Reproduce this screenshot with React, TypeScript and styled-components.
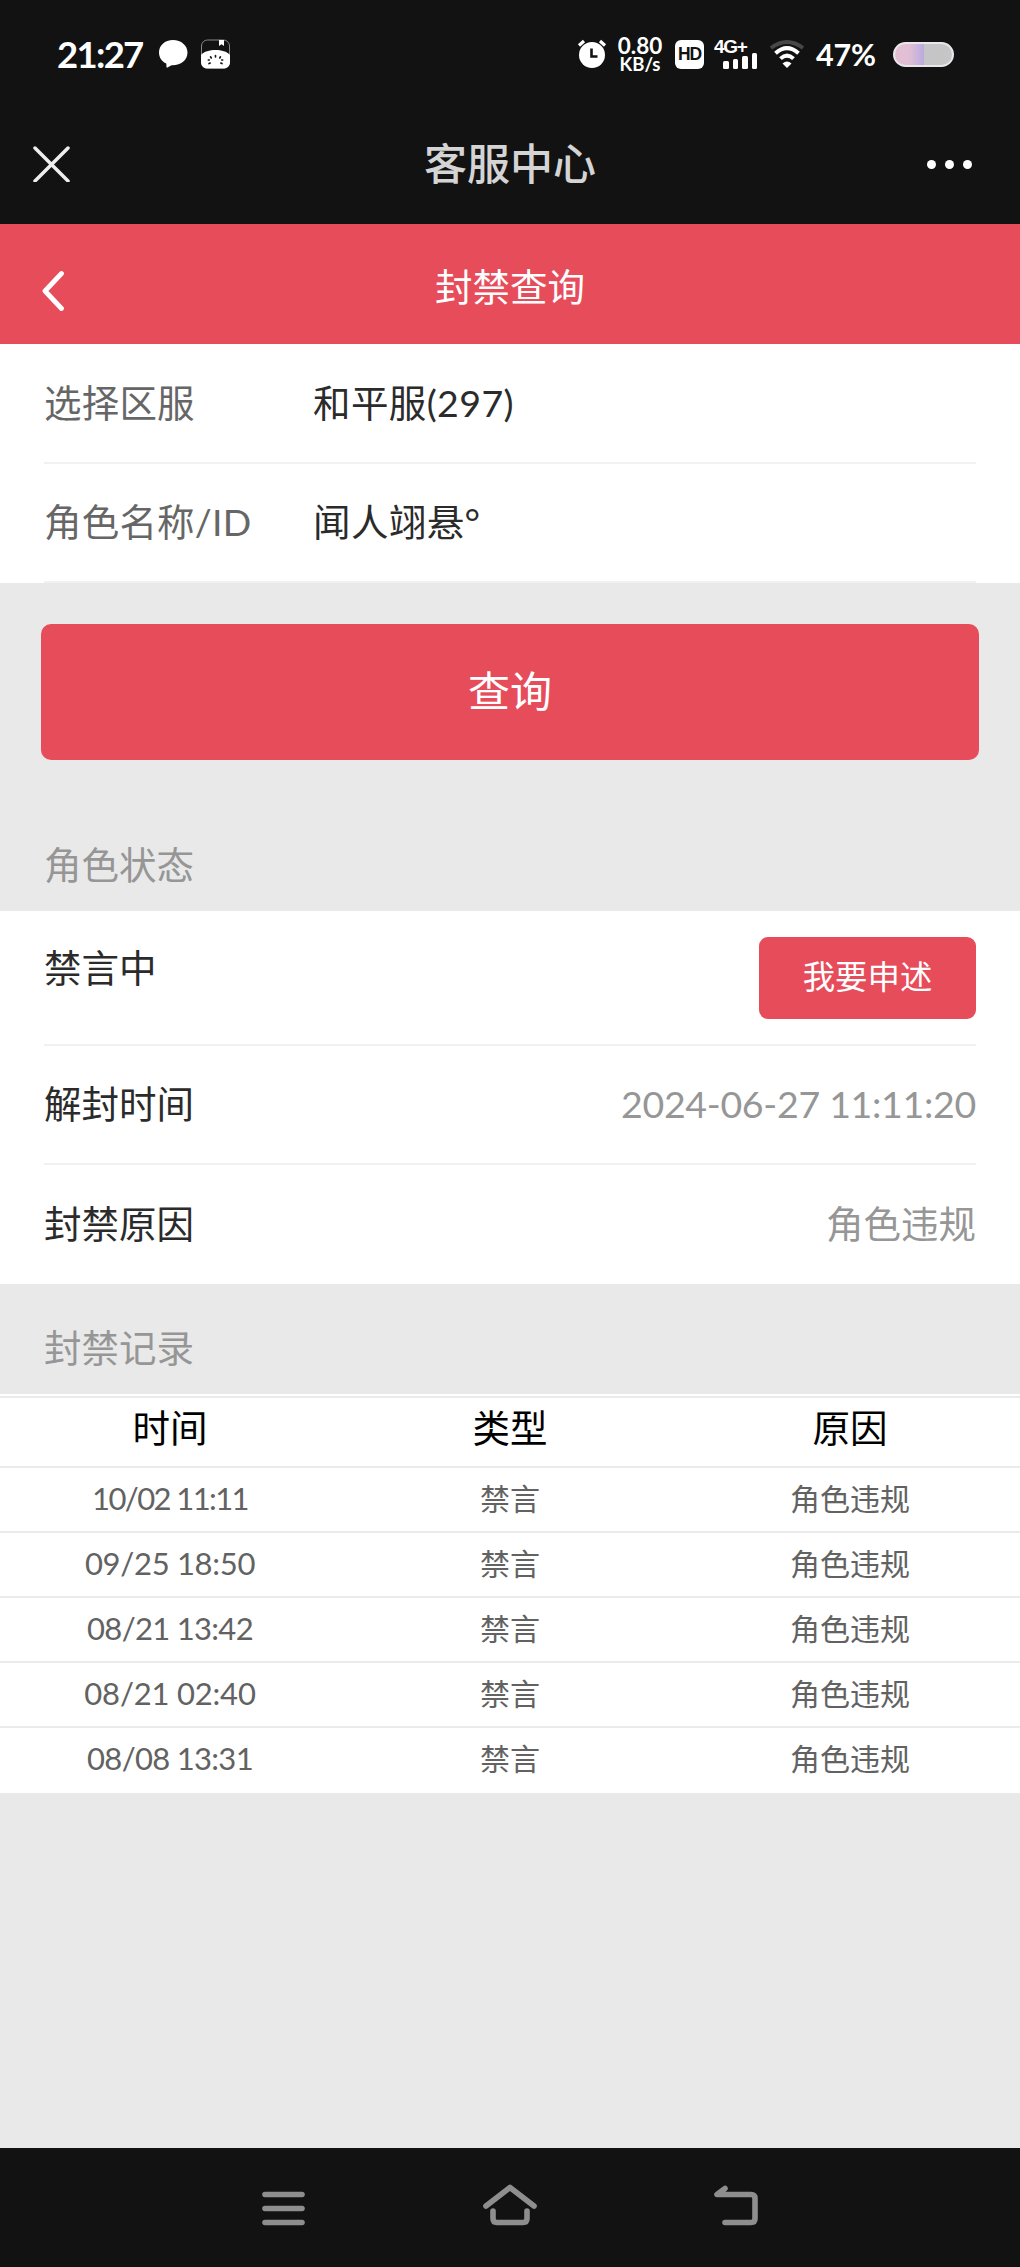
import React from 'react';
import styled, { createGlobalStyle } from 'styled-components';

const RED = '#e74c5b';
const BLACK = '#121212';

const GlobalStyle = createGlobalStyle`
  * { box-sizing: border-box; }
  body {
    margin: 0;
    background: #e9e9e9;
    font-family: Lato, "Noto Sans CJK SC", sans-serif;
  }
`;

const Screen = styled.div`
  width: 1020px;
  height: 2267px;
  display: flex;
  flex-direction: column;
  background: #e9e9e9;
  overflow: hidden;
`;

const StatusBar = styled.header`
  height: 106px;
  padding: 2px 66px 0 57px;
  display: flex;
  justify-content: space-between;
  align-items: center;
  background: ${BLACK};
  color: #fff;
`;

const StatusGroup = styled.div`
  display: flex;
  align-items: center;
  height: 38px;
`;

const Clock = styled.span`
  width: 101px;
  font-size: 36.5px;
  font-weight: 700;
  letter-spacing: -1.7px;
  line-height: 36px;
  white-space: nowrap;
`;

const NetSpeed = styled.div`
  width: 46px;
  margin: 0 12px 0 10px;
  display: flex;
  flex-direction: column;
  align-items: center;
  font-weight: 700;
  white-space: nowrap;
`;

const SpeedValue = styled.span`
  font-size: 22.5px;
  line-height: 20px;
`;

const SpeedUnit = styled.span`
  font-size: 18.5px;
  line-height: 17px;
`;

const HdBadge = styled.span`
  width: 29px;
  height: 29px;
  margin-right: 10px;
  display: flex;
  align-items: center;
  justify-content: center;
  border-radius: 6px;
  background: #fff;
  color: ${BLACK};
  font: 700 17.5px/29px "Liberation Sans", sans-serif;
  letter-spacing: -1.2px;
`;

const Signal = styled.div`
  width: 43px;
  height: 30px;
  margin-right: 12px;
  display: grid;
  grid-template-rows: 14px 16px;
`;

const SignalLabel = styled.span`
  font: 700 19px/16px "Liberation Sans", sans-serif;
  letter-spacing: -1.3px;
`;

const SignalBars = styled.div`
  display: flex;
  justify-content: flex-end;
  align-items: flex-end;
  gap: 4px;
`;

const Bar = styled.i<{ $height: number }>`
  width: 5.5px;
  height: ${({ $height }) => $height}px;
  border-radius: 1.5px;
  background: #fff;
`;

const Percent = styled.span`
  width: 88px;
  padding-left: 11px;
  font-size: 30.5px;
  font-weight: 700;
  line-height: 34px;
  letter-spacing: -0.2px;
  white-space: nowrap;
`;

const Battery = styled.div`
  width: 61px;
  height: 25px;
  border: 2px solid #e9e7ec;
  border-radius: 12.5px;
  background: linear-gradient(90deg, #e5bfd3 0%, #e0bfd5 25%, #b9ace0 50%, #c5c5c8 51%, #c6c6c6 100%);
`;

const AppBar = styled.div`
  height: 118px;
  padding: 0 48px 2px 33px;
  display: grid;
  grid-template-columns: 1fr auto 1fr;
  align-items: center;
  background: ${BLACK};
`;

const AppTitle = styled.h1`
  margin: 0 0 0 15px;
  color: #d4d4d4;
  font-size: 43px;
  font-weight: 500;
  line-height: 60px;
`;

const Dots = styled.div`
  display: flex;
  justify-content: flex-end;
  gap: 9px;
`;

const Dot = styled.i`
  width: 9px;
  height: 9px;
  border-radius: 50%;
  background: #fff;
`;

const PageBar = styled.div`
  height: 120px;
  padding: 6px 42px 0;
  display: grid;
  grid-template-columns: 1fr auto 1fr;
  align-items: center;
  background: ${RED};
`;

const PageTitle = styled.h2`
  margin: 0;
  color: #fff;
  font-size: 37.5px;
  font-weight: 400;
  line-height: 50px;
`;

const Panel = styled.section`
  padding: 0 44px;
  background: #fff;
`;

const Row = styled.div<{ $height?: number; $last?: boolean }>`
  height: ${({ $height = 120 }) => $height}px;
  display: flex;
  align-items: center;
  border-bottom: ${({ $last }) => ($last ? 'none' : '2px solid #f1f1f1')};
  color: #2b2b2b;
  font-size: 37.5px;
  line-height: 50px;
  white-space: nowrap;
`;

const FieldLabel = styled.span`
  width: 269px;
  padding-bottom: 1px;
  color: #666;
  letter-spacing: 0.2px;
`;

const FieldValue = styled.span`
  padding-bottom: 1px;
  color: #2b2b2b;
  letter-spacing: 0.4px;
`;

const StateLabel = styled.span<{ $raised?: boolean }>`
  flex: 1;
  margin-bottom: ${({ $raised }) => ($raised ? '19px' : '2px')};
`;

const StateValue = styled.span<{ $spacing?: number }>`
  margin-bottom: 2px;
  color: #969696;
  letter-spacing: ${({ $spacing = 0 }) => $spacing}px;
`;

const QueryButton = styled.button`
  height: 136px;
  margin: 41px 41px 0;
  padding: 0 0 3px;
  border: 0;
  border-radius: 10px;
  background: ${RED};
  color: #fff;
  font: 400 42px/60px Lato, "Noto Sans CJK SC", sans-serif;
`;

const AppealButton = styled.button`
  width: 217px;
  height: 82px;
  padding: 0 0 2px;
  border: 0;
  border-radius: 9px;
  background: ${RED};
  color: #fff;
  font: 400 32.4px/44px Lato, "Noto Sans CJK SC", sans-serif;
`;

const SectionHeading = styled.h3<{ $height: number }>`
  height: ${({ $height }) => $height}px;
  margin: 0;
  padding: 0 44px 21px;
  display: flex;
  align-items: flex-end;
  color: #969696;
  font-size: 37.5px;
  font-weight: 400;
  line-height: 50px;
`;

const Table = styled.table`
  width: 100%;
  border-top: 2px solid #fff;
  border-spacing: 0;
  table-layout: fixed;
  background: #fff;
  text-align: center;
`;

const HeadCell = styled.th`
  height: 71.5px;
  padding: 0 0 7px;
  border-top: 2px solid #ebebeb;
  border-bottom: 2px solid #ebebeb;
  color: #000;
  font-size: 37.5px;
  font-weight: 400;
  line-height: 50px;
`;

const Cell = styled.td<{ $last?: boolean }>`
  height: 65px;
  padding: 0 0 3px;
  border-bottom: 2px solid ${({ $last }) => ($last ? '#fff' : '#ebebeb')};
  color: #626262;
  font-size: 30px;
  line-height: 44px;
`;

const DateText = styled.span<{ $spacing: number }>`
  font-size: 31px;
  letter-spacing: ${({ $spacing }) => $spacing}px;
`;

const NavBar = styled.nav`
  height: 119px;
  margin-top: auto;
  padding: 0 169px;
  display: grid;
  grid-template-columns: repeat(3, 1fr);
  justify-items: center;
  align-items: center;
  background: ${BLACK};
`;

const NavIcon = styled.svg`
  width: 60px;
  height: 48px;
  fill: none;
  stroke: #8e8e8e;
  stroke-width: 5.6;
  stroke-linecap: round;
  stroke-linejoin: round;
`;

const Glyph = styled.svg<{ $w: number; $h: number; $mr?: number }>`
  width: ${({ $w }) => $w}px;
  height: ${({ $h }) => $h}px;
  margin-right: ${({ $mr = 0 }) => $mr}px;
  flex: none;
`;

const BackArrow = styled(Glyph)`
  margin-top: 8px;
`;

const records = [
  { time: '10/02 11:11', spacing: -1.6 },
  { time: '09/25 18:50', spacing: -0.3 },
  { time: '08/21 13:42', spacing: -0.7 },
  { time: '08/21 02:40', spacing: -0.2 },
  { time: '08/08 13:31', spacing: -0.7 },
];

export default function App() {
  return (
    <>
      <GlobalStyle />
      <Screen>
        <StatusBar>
          <StatusGroup>
            <Clock>21:27</Clock>
            <Glyph $w={30} $h={30} $mr={12} viewBox="0 0 30 30">
              <path
                fill="#fff"
                d="M15 1C6.800 1 1 6.500 1 13.500c0 5 2.900 9 7.300 11L8.500 28c0 .6.500.9 1 .6l4-2.400c8.700.5 16-4.700 16-12.700C29.500 6.500 23.200 1 15 1Z"
              />
            </Glyph>
            <Glyph $w={30} $h={30} viewBox="0 0 30 30">
              <rect x="1.500" y="1" width="28" height="28" rx="6" fill="none" stroke="#888" strokeWidth="1" />
              <path fill="#fff" d="M1 16c3-3.600 8.500-5 14.500-5S27 12.400 30 16v7c0 4-2.500 6.500-6.500 6.500h-16C3.500 29.500 1 27 1 23ZM19 1h5v6l-2.500-1.700L19 7Z" />
              <path
                stroke={BLACK}
                strokeWidth="1.600"
                strokeLinecap="round"
                d="M15.500 16.500v1.500M10.500 17.800l.8 1.200M20.500 17.800l-.8 1.200M8.300 21h1M21.700 21h1M9 24.600l1.200-.5M22 24.600l-1.200-.5"
              />
            </Glyph>
          </StatusGroup>
          <StatusGroup>
            <Glyph $w={30} $h={30} viewBox="0 0 30 30">
              <circle cx="15" cy="16" r="13" fill="#fff" />
              <path d="M2 6.500 7 2M28 6.500 23 2" stroke="#fff" strokeWidth="3.200" />
              <path d="M14.500 9.500v8h6" fill="none" stroke={BLACK} strokeWidth="2.600" />
            </Glyph>
            <NetSpeed>
              <SpeedValue>0.80</SpeedValue>
              <SpeedUnit>KB/s</SpeedUnit>
            </NetSpeed>
            <HdBadge>HD</HdBadge>
            <Signal>
              <SignalLabel>4G+</SignalLabel>
              <SignalBars>
                <Bar $height={8} />
                <Bar $height={10} />
                <Bar $height={13} />
                <Bar $height={16} />
              </SignalBars>
            </Signal>
            <Glyph $w={36} $h={30} viewBox="0 0 36 30">
              <g fill="none" strokeWidth="4">
                <path d="M2 9Q18-3 34 9" stroke="#474747" />
                <path d="M6.500 14.200Q18 4.200 29.500 14.200" stroke="#fff" />
                <path d="M11.500 19.600Q18 13.500 24.500 19.600" stroke="#fff" />
              </g>
              <path d="M13.500 24.500Q18 20.500 22.500 24.500L18 29Z" fill="#fff" />
            </Glyph>
            <Percent>47%</Percent>
            <Battery />
          </StatusGroup>
        </StatusBar>

        <AppBar>
          <Glyph $w={37} $h={36} viewBox="0 0 37 36">
            <path d="m2 2 33 33M35 2 2 35" stroke="#eee" strokeWidth="3.500" strokeLinecap="round" />
          </Glyph>
          <AppTitle>客服中心</AppTitle>
          <Dots>
            <Dot />
            <Dot />
            <Dot />
          </Dots>
        </AppBar>

        <PageBar>
          <BackArrow $w={23} $h={44} viewBox="0 0 23 44">
            <path d="M19.500 4.500 3 22l16.500 17.500" fill="none" stroke="#fff" strokeWidth="4.800" strokeLinecap="round" strokeLinejoin="round" />
          </BackArrow>
          <PageTitle>封禁查询</PageTitle>
        </PageBar>

        <Panel>
          <Row>
            <FieldLabel>选择区服</FieldLabel>
            <FieldValue>和平服(297)</FieldValue>
          </Row>
          <Row $height={119}>
            <FieldLabel>角色名称/ID</FieldLabel>
            <FieldValue>闻人翊悬°</FieldValue>
          </Row>
        </Panel>

        <QueryButton>查询</QueryButton>

        <SectionHeading $height={151}>角色状态</SectionHeading>
        <Panel>
          <Row $height={135}>
            <StateLabel $raised>禁言中</StateLabel>
            <AppealButton>我要申述</AppealButton>
          </Row>
          <Row $height={119}>
            <StateLabel>解封时间</StateLabel>
            <StateValue $spacing={-0.3}>2024-06-27 11:11:20</StateValue>
          </Row>
          <Row $height={119} $last>
            <StateLabel>封禁原因</StateLabel>
            <StateValue>角色违规</StateValue>
          </Row>
        </Panel>

        <SectionHeading $height={110}>封禁记录</SectionHeading>
        <Table>
          <thead>
            <tr>
              <HeadCell>时间</HeadCell>
              <HeadCell>类型</HeadCell>
              <HeadCell>原因</HeadCell>
            </tr>
          </thead>
          <tbody>
            {records.map(({ time, spacing }, index) => {
              const last = index === records.length - 1;
              return (
                <tr key={time}>
                  <Cell $last={last}>
                    <DateText $spacing={spacing}>{time}</DateText>
                  </Cell>
                  <Cell $last={last}>禁言</Cell>
                  <Cell $last={last}>角色违规</Cell>
                </tr>
              );
            })}
          </tbody>
        </Table>

        <NavBar>
          <NavIcon viewBox="0 0 60 48">
            <path d="M12 10.500h37M12 24.500h37M12 38.500h37" />
          </NavIcon>
          <NavIcon viewBox="0 0 60 48">
            <path d="M6 22 30 3.500 54 22M13 27v7.500q0 4 4 4h26q4 0 4-4V27" />
          </NavIcon>
          <NavIcon viewBox="0 0 60 48">
            <path d="M18 4.500 10 10.500h34q4 0 4 4v20q0 4-4 4H18" />
          </NavIcon>
        </NavBar>
      </Screen>
    </>
  );
}
